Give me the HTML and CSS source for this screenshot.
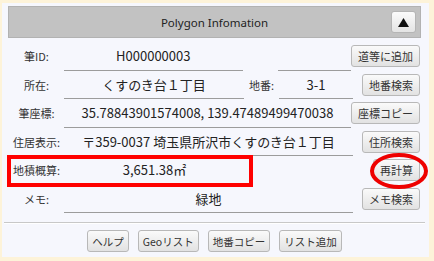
FILE: index.html
```html
<!DOCTYPE html>
<html lang="ja">
<head>
<meta charset="utf-8">
<link rel="stylesheet" href="styles.css">
</head>
<body>
<div class="panel">
  <div class="header">
    <span class="title">Polygon Infomation</span>
    <button class="collapse"><svg width="11" height="9" viewBox="0 0 11 9"><polygon points="5.5,0 11,9 0,9" fill="#111"/></svg></button>
  </div>
  <div class="rows">
    <div class="row">
      <span class="label">筆ID:</span>
      <div class="field fa">H000000003</div>
      <span class="mid"></span>
      <div class="field fb"></div>
      <div class="actions"><button class="btn">道等に追加</button></div>
    </div>
    <div class="row">
      <span class="label">所在:</span>
      <div class="field fa">くすのき台１丁目</div>
      <span class="mid">地番:</span>
      <div class="field fb">3-1</div>
      <div class="actions"><button class="btn">地番検索</button></div>
    </div>
    <div class="row">
      <span class="label">筆座標:</span>
      <div class="field full">35.78843901574008, 139.47489499470038</div>
      <div class="actions"><button class="btn">座標コピー</button></div>
    </div>
    <div class="row">
      <span class="label">住居表示:</span>
      <div class="field full">〒359-0037 埼玉県所沢市くすのき台１丁目</div>
      <div class="actions"><button class="btn">住所検索</button></div>
    </div>
    <div class="row">
      <span class="label">地積概算:</span>
      <div class="field area">3,651.38㎡</div>
      <span class="spacer"></span>
      <div class="actions"><button class="btn">再計算</button></div>
    </div>
    <div class="row">
      <span class="label">メモ:</span>
      <div class="field full">緑地</div>
      <div class="actions"><button class="btn">メモ検索</button></div>
    </div>
  </div>
  <div class="sep"></div>
  <div class="footer">
    <button class="btn fbtn">ヘルプ</button>
    <button class="btn fbtn">Geoリスト</button>
    <button class="btn fbtn">地番コピー</button>
    <button class="btn fbtn">リスト追加</button>
  </div>
  <div class="mark-rect"></div>
  <div class="mark-ellipse"></div>
</div>
</body>
</html>
```
FILE: styles.css
```css
html, body {
  margin: 0;
  padding: 0;
}
body {
  background: #fdf3d9;
  font-family: "Noto Sans CJK JP", "Noto Sans", sans-serif;
  color: #222;
}
.panel {
  position: relative;
  box-sizing: border-box;
  width: 427px;
  height: 254px;
  margin: 3px 0 0 2px;
  padding: 3px 8px 0 6px;
  background: #f6f7fd;
}
.header {
  box-sizing: border-box;
  height: 32px;
  background: #c2c2c2;
  border: 1px solid #b2b2b2;
  display: grid;
  grid-template-columns: 1fr auto 1fr;
  align-items: center;
}
.title {
  grid-column: 2;
  font-family: "Noto Sans", sans-serif;
  font-size: 11.5px;
  color: #222;
}
.collapse {
  grid-column: 3;
  justify-self: end;
  margin-right: 4px;
  width: 25px;
  height: 22px;
  padding: 0;
  border: 1px solid #b5b5b5;
  border-radius: 3px;
  background: linear-gradient(#fbfbfb, #e4e4e4);
  display: flex;
  align-items: center;
  justify-content: center;
}
.rows {
  margin-top: 4px;
  padding: 0 1px;
}
.row {
  display: flex;
  height: 28.5px;
}
.label {
  width: 55px;
  flex: none;
  display: flex;
  align-items: center;
  justify-content: center;
  font-size: 11px;
  color: #333;
}
.field {
  box-sizing: border-box;
  display: flex;
  align-items: center;
  justify-content: center;
  font-size: 13px;
  color: #222;
  border-bottom: 1px solid #9c9c9c;
  white-space: nowrap;
}
.fa { width: 180px; }
.mid {
  width: 35px;
  flex: none;
  display: flex;
  align-items: center;
  justify-content: center;
  font-size: 11px;
  color: #333;
}
.fb { width: 74px; }
.full { width: 289px; }
.area { width: 181px; }
.spacer { width: 108px; flex: none; }
.actions {
  flex: 1;
  display: flex;
  align-items: center;
  justify-content: flex-end;
}
.btn {
  box-sizing: border-box;
  height: 22px;
  padding: 0 6px;
  font-family: "Noto Sans CJK JP", sans-serif;
  font-size: 11px;
  color: #333;
  border: 1px solid #b8b8b8;
  border-radius: 3px;
  background: linear-gradient(#fafafa, #e2e2e2);
  white-space: nowrap;
}
.fbtn {
  padding: 0 4px;
  font-size: 10.5px;
}
.sep {
  margin: 9px -4px 0 -4px;
  height: 1px;
  background: #c8c8c8;
  box-shadow: 0 1px 0 #ffffff;
}
.footer {
  margin-top: 7px;
  display: flex;
  justify-content: center;
  gap: 9px;
}
.mark-rect {
  position: absolute;
  left: 5px;
  top: 152px;
  width: 246px;
  height: 32px;
  box-sizing: border-box;
  border: 4px solid #ff0000;
}
.mark-ellipse {
  position: absolute;
  left: 368px;
  top: 150px;
  width: 58px;
  height: 36px;
  box-sizing: border-box;
  border: 4px solid #ee0000;
  border-radius: 50%;
}
```
